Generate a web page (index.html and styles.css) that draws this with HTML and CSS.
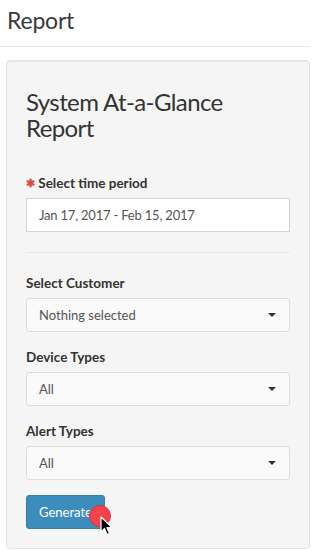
FILE: index.html
```html
<!DOCTYPE html>
<html>
<head>
<meta charset="utf-8">
<link rel="stylesheet" href="styles.css">
</head>
<body>
<div class="page">
  <div class="page-header">
    <h1 class="page-title">Report</h1>
  </div>
  <div class="well">
    <h3 class="well-title">System At-a-Glance Report</h3>
    <div class="form-group">
      <label class="label"><span class="req">&#x2731;</span> Select time period</label>
      <div class="input">Jan 17, 2017 - Feb 15, 2017</div>
    </div>
    <hr class="divider">
    <div class="form-group">
      <label class="label">Select Customer</label>
      <div class="select">Nothing selected<span class="caret"></span></div>
    </div>
    <div class="form-group">
      <label class="label">Device Types</label>
      <div class="select">All<span class="caret"></span></div>
    </div>
    <div class="form-group">
      <label class="label">Alert Types</label>
      <div class="select">All<span class="caret"></span></div>
    </div>
    <div class="actions">
      <button class="btn">Generate</button>
      <span class="click-dot"></span>
      <svg class="cursor" width="13" height="21" viewBox="0 0 13 21"><path d="M1 1 L1 16 L4.5 12.5 L7 18.5 L9.5 17.5 L7 11.5 L12 11.5 Z" fill="#000" stroke="#fff" stroke-width="1.2" stroke-linejoin="round"/></svg>
    </div>
  </div>
</div>
</body>
</html>
```

FILE: styles.css
```css
html, body {
  margin: 0;
  padding: 0;
  background: #fff;
}
body {
  font-family: "Lato", "Open Sans", sans-serif;
  color: #333;
  font-size: 14px;
}
.page {
  width: 310px;
}
.page-header {
  border-bottom: 1px solid #e8e8e8;
  padding: 7px 7px 12px;
}
.page-title {
  margin: 0;
  font-size: 23px;
  font-weight: 400;
  line-height: 27px;
  color: #3a3a3a;
  letter-spacing: -0.2px;
}
.well {
  margin: 13px 0 0 6px;
  background: #f5f5f5;
  border: 1px solid #e3e3e3;
  border-radius: 4px;
  padding: 19px;
  box-shadow: inset 0 1px 1px rgba(0,0,0,0.05);
}
.well-title {
  margin: 9px 0 32px;
  font-size: 24px;
  font-weight: 400;
  line-height: 26px;
  color: #333;
  letter-spacing: -0.6px;
}
.form-group {
  margin-bottom: 15px;
}
.label {
  display: block;
  font-weight: 700;
  font-size: 13.5px;
  line-height: 20px;
  margin-bottom: 5px;
  color: #333;
}
.req {
  color: #dd4b39;
  font-size: 11px;
  display: inline-block;
  vertical-align: 1px;
}
.input, .select {
  position: relative;
  box-sizing: border-box;
  height: 34px;
  padding: 0 12px;
  line-height: 32px;
  font-size: 13px;
  color: #555;
}
.input {
  background: #fff;
  border: 1px solid #d2d6de;
  letter-spacing: -0.2px;
}
.select {
  background: #fafafa;
  border: 1px solid #ddd;
  border-radius: 3px;
}
.caret {
  position: absolute;
  right: 13px;
  top: 14px;
  width: 0;
  height: 0;
  border-left: 4px solid transparent;
  border-right: 4px solid transparent;
  border-top: 4px solid #333;
}
.divider {
  margin: 20px 0;
  border: 0;
  border-top: 1px solid #e8e8e8;
}
.actions {
  position: relative;
  height: 34px;
}
.btn {
  height: 34px;
  box-sizing: border-box;
  padding: 0 12px;
  background: #3c8dbc;
  border: 1px solid #367fa9;
  border-radius: 3px;
  color: #fff;
  font-family: inherit;
  font-size: 13px;
  line-height: 32px;
}
.click-dot {
  position: absolute;
  left: 63px;
  top: 10px;
  width: 22px;
  height: 22px;
  box-sizing: border-box;
  border-radius: 50%;
  background: #f2424a;
  border: 1px solid #d8343c;
}
.cursor {
  position: absolute;
  left: 74px;
  top: 21px;
}
```
